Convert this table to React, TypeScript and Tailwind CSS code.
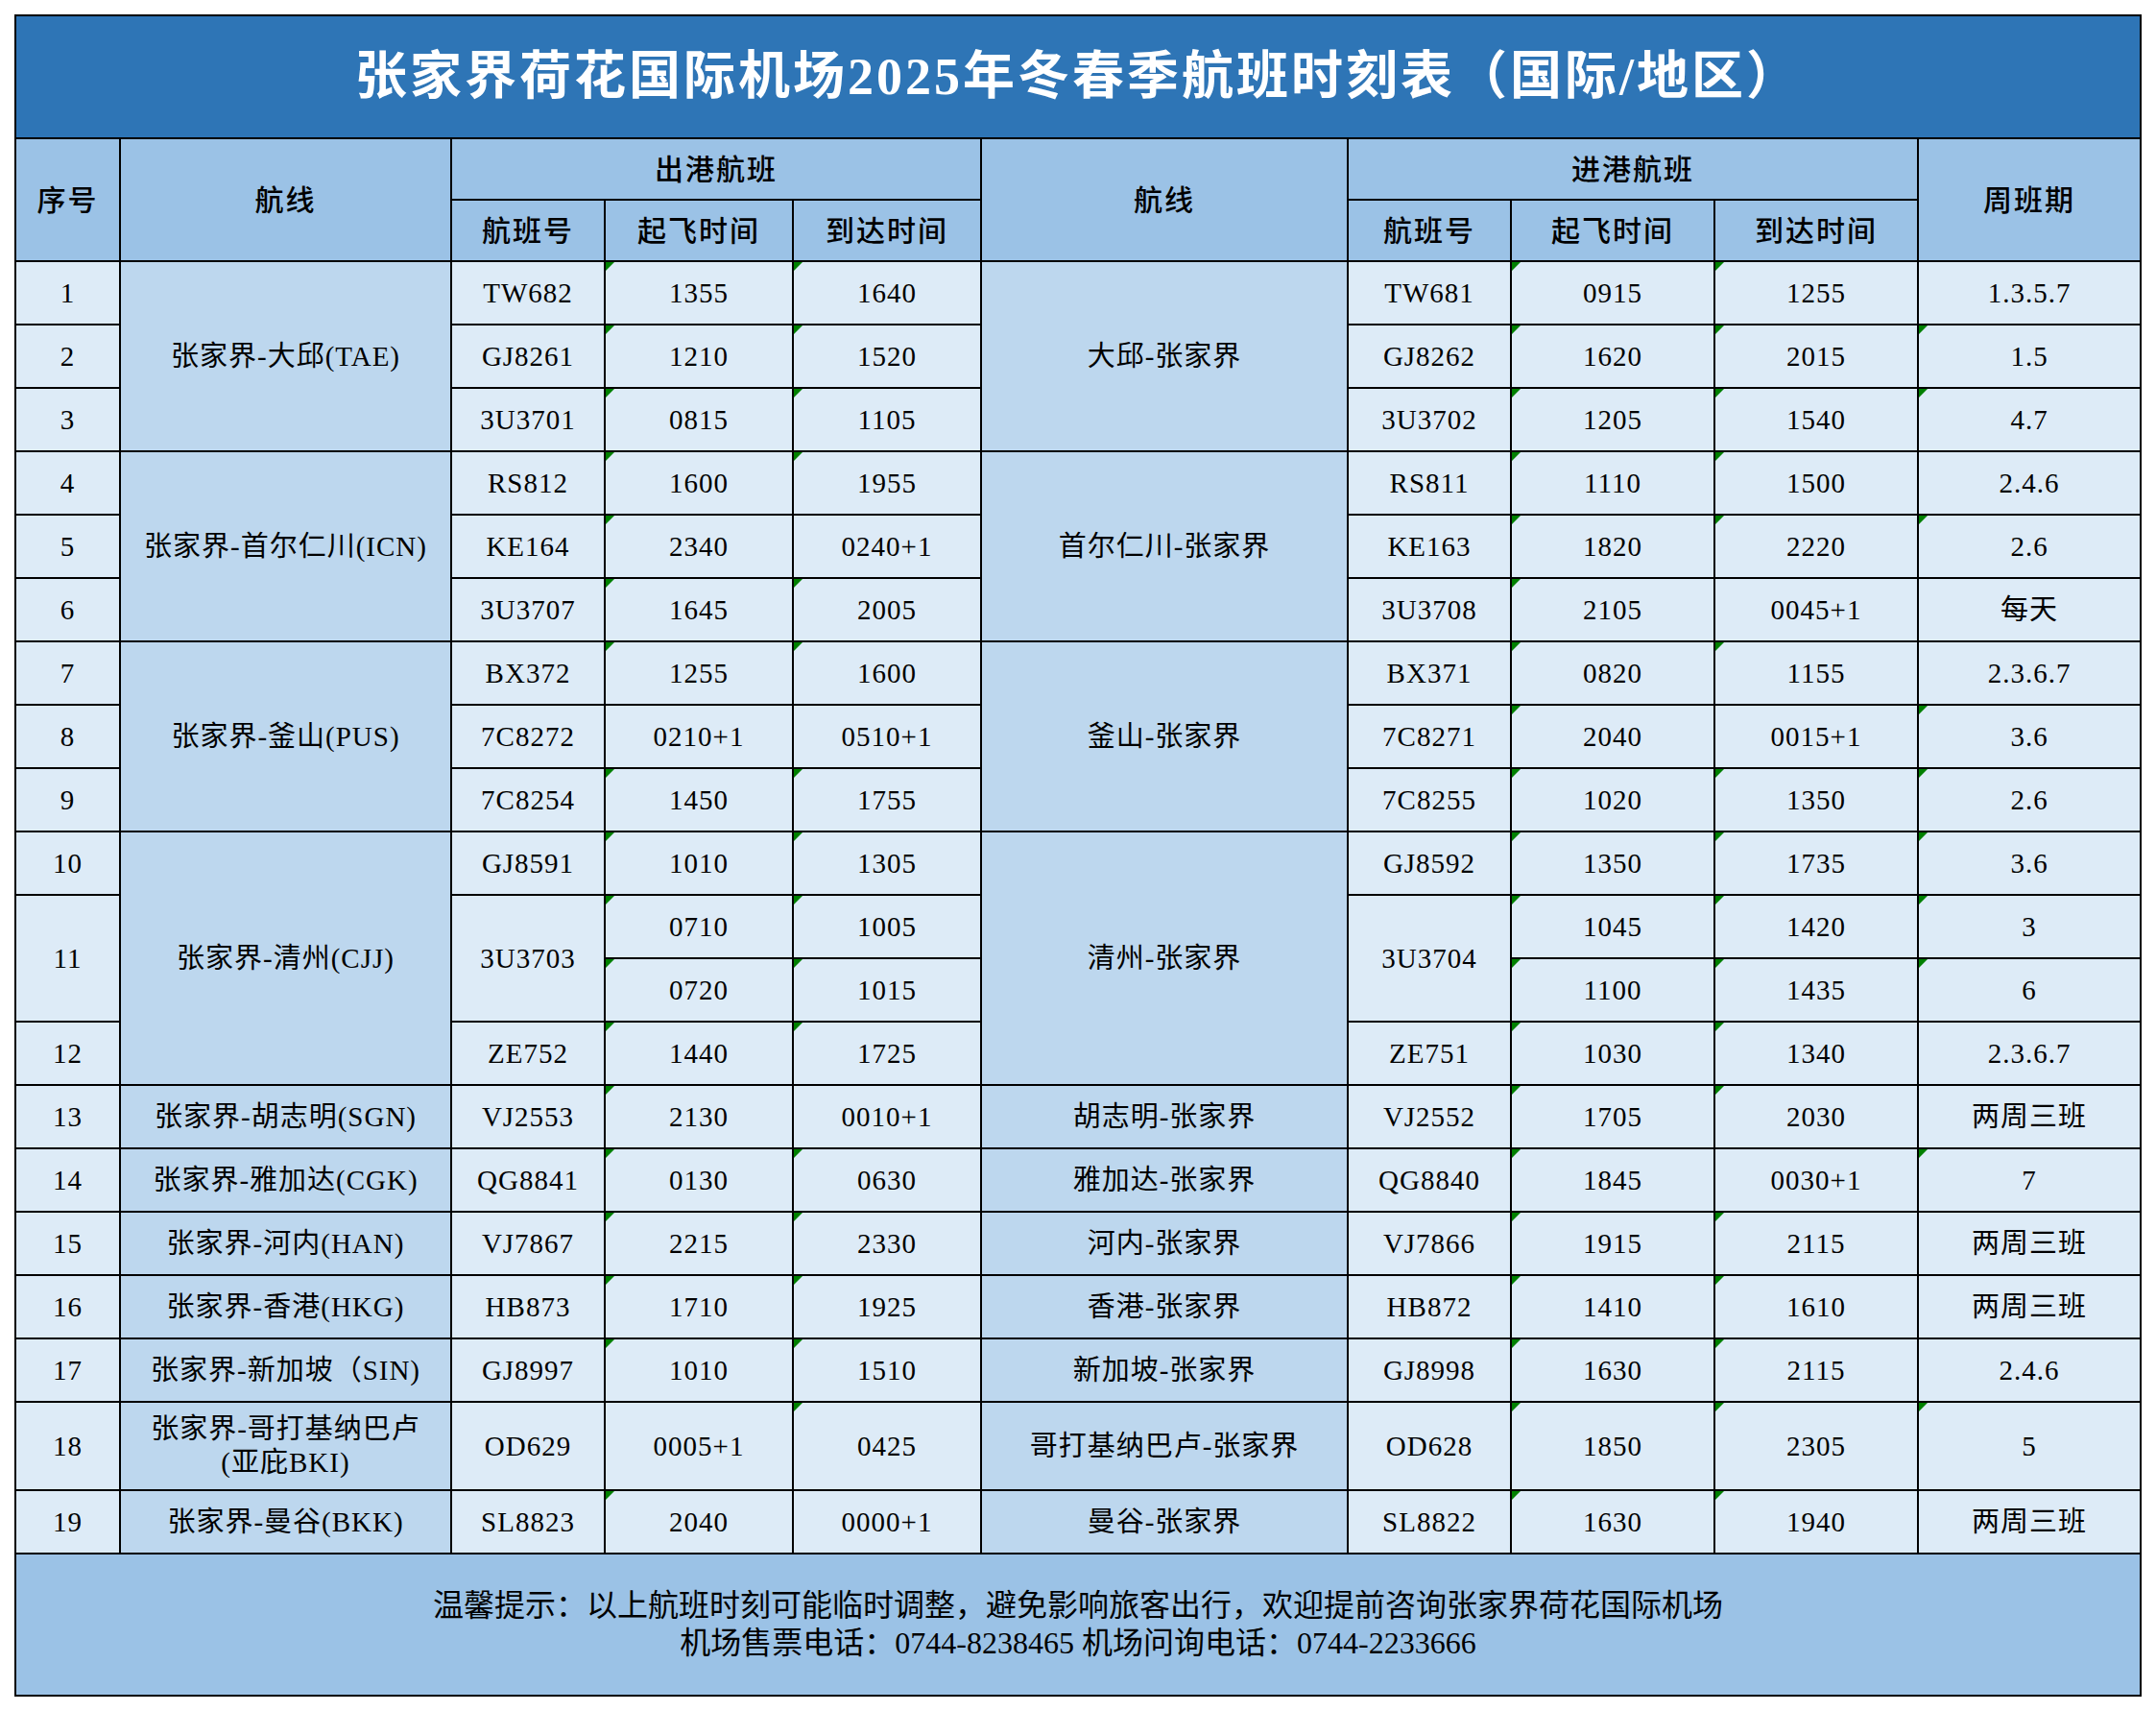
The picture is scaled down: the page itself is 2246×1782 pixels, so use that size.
import type { ReactNode } from "react";

type Kind = "seq" | "route" | "data";
type Cell = { t: string; rs?: number; k: Kind };

const s = (t: string, rs = 1): Cell => ({ t, rs, k: "seq" });
const r = (t: string, rs = 1): Cell => ({ t, rs, k: "route" });
const d = (t: string, rs = 1): Cell => ({ t, rs, k: "data" });

const rowSpan: Record<number, string> = {
  1: "",
  2: "row-span-2",
  3: "row-span-3",
  4: "row-span-4",
};

// one entry per grid track, cells listed like table cells (row-spans skip slots)
const body: Cell[][] = [
  [s("1"), r("张家界-大邱(TAE)", 3), d("TW682"), d("1355"), d("1640"), r("大邱-张家界", 3), d("TW681"), d("0915"), d("1255"), d("1.3.5.7")],
  [s("2"), d("GJ8261"), d("1210"), d("1520"), d("GJ8262"), d("1620"), d("2015"), d("1.5")],
  [s("3"), d("3U3701"), d("0815"), d("1105"), d("3U3702"), d("1205"), d("1540"), d("4.7")],
  [s("4"), r("张家界-首尔仁川(ICN)", 3), d("RS812"), d("1600"), d("1955"), r("首尔仁川-张家界", 3), d("RS811"), d("1110"), d("1500"), d("2.4.6")],
  [s("5"), d("KE164"), d("2340"), d("0240+1"), d("KE163"), d("1820"), d("2220"), d("2.6")],
  [s("6"), d("3U3707"), d("1645"), d("2005"), d("3U3708"), d("2105"), d("0045+1"), d("每天")],
  [s("7"), r("张家界-釜山(PUS)", 3), d("BX372"), d("1255"), d("1600"), r("釜山-张家界", 3), d("BX371"), d("0820"), d("1155"), d("2.3.6.7")],
  [s("8"), d("7C8272"), d("0210+1"), d("0510+1"), d("7C8271"), d("2040"), d("0015+1"), d("3.6")],
  [s("9"), d("7C8254"), d("1450"), d("1755"), d("7C8255"), d("1020"), d("1350"), d("2.6")],
  [s("10"), r("张家界-清州(CJJ)", 4), d("GJ8591"), d("1010"), d("1305"), r("清州-张家界", 4), d("GJ8592"), d("1350"), d("1735"), d("3.6")],
  [s("11", 2), d("3U3703", 2), d("0710"), d("1005"), d("3U3704", 2), d("1045"), d("1420"), d("3")],
  [d("0720"), d("1015"), d("1100"), d("1435"), d("6")],
  [s("12"), d("ZE752"), d("1440"), d("1725"), d("ZE751"), d("1030"), d("1340"), d("2.3.6.7")],
  [s("13"), r("张家界-胡志明(SGN)"), d("VJ2553"), d("2130"), d("0010+1"), r("胡志明-张家界"), d("VJ2552"), d("1705"), d("2030"), d("两周三班")],
  [s("14"), r("张家界-雅加达(CGK)"), d("QG8841"), d("0130"), d("0630"), r("雅加达-张家界"), d("QG8840"), d("1845"), d("0030+1"), d("7")],
  [s("15"), r("张家界-河内(HAN)"), d("VJ7867"), d("2215"), d("2330"), r("河内-张家界"), d("VJ7866"), d("1915"), d("2115"), d("两周三班")],
  [s("16"), r("张家界-香港(HKG)"), d("HB873"), d("1710"), d("1925"), r("香港-张家界"), d("HB872"), d("1410"), d("1610"), d("两周三班")],
  [s("17"), r("张家界-新加坡（SIN)"), d("GJ8997"), d("1010"), d("1510"), r("新加坡-张家界"), d("GJ8998"), d("1630"), d("2115"), d("2.4.6")],
  [s("18"), r("张家界-哥打基纳巴卢\n(亚庇BKI)"), d("OD629"), d("0005+1"), d("0425"), r("哥打基纳巴卢-张家界"), d("OD628"), d("1850"), d("2305"), d("5")],
  [s("19"), r("张家界-曼谷(BKK)"), d("SL8823"), d("2040"), d("0000+1"), r("曼谷-张家界"), d("SL8822"), d("1630"), d("1940"), d("两周三班")],
];

// Excel's "number stored as text" marker
const isNumText = (c: Cell) => c.k === "data" && /^\d+(\.\d+)?$/.test(c.t);

function Marker() {
  return (
    <span className="absolute left-0 top-0 h-[9px] w-[9px] bg-[#008000] [clip-path:polygon(0_0,100%_0,0_100%)]" />
  );
}

function Head({ children, className = "" }: { children: ReactNode; className?: string }) {
  return (
    <div className={`flex items-center justify-center bg-[#9bc2e6] text-[30px] font-medium tracking-[2px] text-black ${className}`}>
      {children}
    </div>
  );
}

function BodyCell({ c }: { c: Cell }) {
  const bg = c.k === "route" ? "bg-[#bdd7ee]" : "bg-[#ddebf7]";
  return (
    <div
      className={`relative flex items-center justify-center whitespace-pre-line text-center text-[29px] leading-[35px] tracking-[1px] text-black ${bg} ${rowSpan[c.rs ?? 1]}`}
    >
      {isNumText(c) && <Marker />}
      {c.t}
    </div>
  );
}

export default function App() {
  return (
    <div className="min-h-[1782px] w-[2246px] bg-white pl-[15px] pt-[15px] font-['Liberation_Serif','Noto_Sans_CJK_SC',serif]">
      <div className="grid w-[2216px] grid-cols-[107px_343px_158px_194px_194px_380px_168px_210px_210px_230px] grid-rows-[126px_62px_62px_repeat(18,64px)_90px_64px_146px] gap-[2px] bg-black p-[2px]">
        {/* title */}
        <div className="col-span-10 flex items-center justify-center bg-[#2e75b6] text-[54px] font-bold tracking-[3px] text-white">
          张家界荷花国际机场2025年冬春季航班时刻表（国际/地区）
        </div>

        {/* header */}
        <Head className="row-span-2">序号</Head>
        <Head className="row-span-2">航线</Head>
        <Head className="col-span-3">出港航班</Head>
        <Head className="row-span-2">航线</Head>
        <Head className="col-span-3">进港航班</Head>
        <Head className="row-span-2">周班期</Head>
        <Head>航班号</Head>
        <Head>起飞时间</Head>
        <Head>到达时间</Head>
        <Head>航班号</Head>
        <Head>起飞时间</Head>
        <Head>到达时间</Head>

        {body.flat().map((c, i) => (
          <BodyCell key={i} c={c} />
        ))}

        {/* footer note */}
        <div className="col-span-10 flex flex-col items-center justify-center bg-[#9bc2e6] text-[32px] leading-[39px] text-black">
          <p>温馨提示：以上航班时刻可能临时调整，避免影响旅客出行，欢迎提前咨询张家界荷花国际机场</p>
          <p>机场售票电话：0744-8238465 机场问询电话：0744-2233666</p>
        </div>
      </div>
    </div>
  );
}
